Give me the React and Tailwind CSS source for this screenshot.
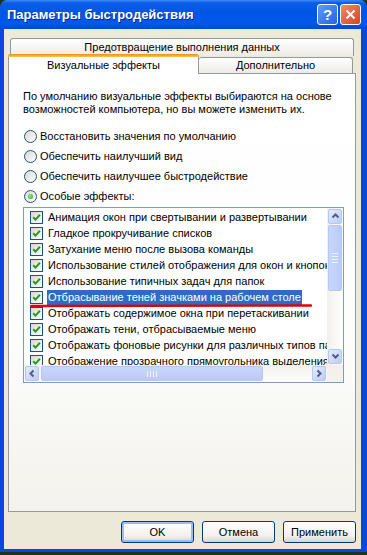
import React from "react";

const items = [
  "Анимация окон при свертывании и развертывании",
  "Гладкое прокручивание списков",
  "Затухание меню после вызова команды",
  "Использование стилей отображения для окон и кнопок",
  "Использование типичных задач для папок",
  "Отбрасывание теней значками на рабочем столе",
  "Отображать содержимое окна при перетаскивании",
  "Отображать тени, отбрасываемые меню",
  "Отображать фоновые рисунки для различных типов папок",
  "Отображение прозрачного прямоугольника выделения",
];

function Radio({ checked, label }) {
  return (
    <div className="h-[20px] flex items-center">
      <span className="ml-[1px] w-[13px] h-[13px] rounded-full border border-[#1c5180] bg-[linear-gradient(135deg,#d8d8d2,#ffffff)] flex items-center justify-center">
        {checked && (
          <span className="w-[5px] h-[5px] rounded-full bg-[radial-gradient(circle_at_40%_40%,#8de88d,#21a121)]" />
        )}
      </span>
      <span className="ml-[3px]">{label}</span>
    </div>
  );
}

function Check() {
  return (
    <span className="shrink-0 w-[13px] h-[13px] border border-[#1c5180] bg-[linear-gradient(135deg,#d8d8d2,#ffffff)] flex items-center justify-center">
      <svg width="9" height="9" viewBox="0 0 9 9">
        <path d="M1.2 4.2 L3.5 6.6 L7.9 1.8" stroke="#21a121" strokeWidth="2" fill="none" />
      </svg>
    </span>
  );
}

function ArrowBtn({ dir, className = "" }) {
  const d = {
    up: "M1.5 5.5 L4.5 2.5 L7.5 5.5",
    down: "M1.5 2.5 L4.5 5.5 L7.5 2.5",
    left: "M5.5 1.5 L2.5 4.5 L5.5 7.5",
    right: "M2.5 1.5 L5.5 4.5 L2.5 7.5",
  }[dir];
  return (
    <div
      className={`shrink-0 rounded-[2px] border border-[#b4c8f6] bg-[linear-gradient(135deg,#e3ebfe,#bccdf6)] flex items-center justify-center ${className}`}
    >
      <svg width="9" height="9" viewBox="0 0 9 9">
        <path d={d} stroke="#4d6185" strokeWidth="2" fill="none" />
      </svg>
    </div>
  );
}

function Button({ children, def }) {
  return (
    <button
      className={`w-[73px] h-[22px] rounded-[3px] border border-[#003c74] bg-[linear-gradient(180deg,#ffffff,#f2f1ec_70%,#d9d5cb)] text-[11px] text-black ${
        def ? "shadow-[inset_0_0_0_2px_#9dbcf2]" : ""
      }`}
    >
      {children}
    </button>
  );
}

export default function App() {
  return (
    <div className="w-[367px] h-[555px] bg-[#1c3519] overflow-hidden font-['Liberation_Sans',Arial,sans-serif] text-[11px] text-black">
      <div className="h-[552px] flex flex-col rounded-t-[7px] overflow-hidden">
        {/* title bar */}
        <div className="h-[29px] shrink-0 flex items-center pl-[7px] pr-[6px] bg-[linear-gradient(180deg,#3b8cf7_0%,#0a5de8_10%,#0055e5_45%,#0059ec_80%,#0048d4_100%)]">
          <span className="flex-1 text-white font-bold text-[13px] [text-shadow:1px_1px_0_#0b2a8a]">
            Параметры быстродействия
          </span>
          <div className="w-[21px] h-[21px] rounded-[3px] border border-white bg-[linear-gradient(135deg,#5d9bf8,#2463e6)] flex items-center justify-center text-white font-bold text-[15px] leading-none">
            ?
          </div>
          <div className="ml-[2px] w-[21px] h-[21px] rounded-[3px] border border-white bg-[linear-gradient(135deg,#ec8b6b,#d9431d)] flex items-center justify-center">
            <svg width="11" height="11" viewBox="0 0 11 11">
              <path d="M1.5 1.5 L9.5 9.5 M9.5 1.5 L1.5 9.5" stroke="white" strokeWidth="2" />
            </svg>
          </div>
        </div>

        {/* body */}
        <div className="flex-1 flex flex-col bg-[#ece9d8] border-l-[4px] border-r-[6px] border-b-[3px] border-[#0b47dd] pt-[9px]">
          {/* tabs */}
          <div className="ml-[6px] w-[344px] h-[18px] rounded-t-[3px] border border-b-0 border-[#919b9c] bg-[linear-gradient(180deg,#ffffff,#ecebe6)] flex items-center justify-center">
            Предотвращение выполнения данных
          </div>
          <div className="flex items-start -mt-[2px]">
            <div className="relative z-10 ml-[4px] w-[191px] h-[20px] -mb-[1px] rounded-t-[3px] border-x border-[#919b9c] bg-white flex flex-col">
              <div className="h-[3px] rounded-t-[3px] bg-[linear-gradient(180deg,#e68b2c,#ffc83c)] -mx-px" />
              <div className="flex-1 flex items-center justify-center pb-[1px]">Визуальные эффекты</div>
            </div>
            <div className="mt-[3px] w-[154px] h-[16px] rounded-t-[3px] border border-b-0 border-l-0 border-[#919b9c] bg-[linear-gradient(180deg,#ffffff,#ecebe6)] flex items-center justify-center">
              Дополнительно
            </div>
          </div>

          {/* panel */}
          <div className="ml-[4px] mr-[5px] h-[439px] border border-[#919b9c] bg-[linear-gradient(180deg,#ffffff_0%,#fdfdfc_60%,#f3f2ec_100%)] px-[14px] pt-[16px]">
            <p className="leading-[13px]">
              По умолчанию визуальные эффекты выбираются на основе
              <br />
              возможностей компьютера, но вы можете изменить их.
            </p>
            <div className="mt-[10px]">
              <Radio label="Восстановить значения по умолчанию" />
              <Radio label="Обеспечить наилучший вид" />
              <Radio label="Обеспечить наилучшее быстродействие" />
              <Radio checked label="Особые эффекты:" />
            </div>

            {/* list */}
            <div className="mt-[1px] w-[321px] h-[176px] border border-[#7f9db9] bg-white flex flex-col">
              <div className="flex-1 flex min-h-0">
                <div className="relative flex-1 overflow-hidden pt-[1px]">
                  {items.map((t, i) => (
                    <div key={i} className="h-[16px] flex items-center pl-[6px] whitespace-nowrap">
                      <Check />
                      <span
                        className={`ml-[4px] px-[1px] leading-[15px] ${
                          i === 5 ? "bg-[#316ac5] text-white" : ""
                        }`}
                      >
                        {t}
                      </span>
                    </div>
                  ))}
                  {/* red underline annotation */}
                  <svg className="absolute left-[6px] top-[95px]" width="282" height="6" viewBox="0 0 282 6">
                    <path d="M1 3 C 60 3.5, 150 3.5, 281 2.5" stroke="#e00000" strokeWidth="2.4" fill="none" strokeLinecap="round" />
                  </svg>
                </div>
                {/* vertical scrollbar */}
                <div className="w-[16px] flex flex-col bg-[linear-gradient(90deg,#f3f1ec,#fefefb)] py-[1px]">
                  <ArrowBtn dir="up" className="h-[15px] mx-[1px]" />
                  <div className="mt-[1px] mx-[1px] h-[66px] rounded-[2px] border border-[#b4c8f6] bg-[linear-gradient(90deg,#c9d7fc,#b9cbf6)] flex flex-col items-center justify-center gap-[2px]">
                    <span className="w-[6px] h-px bg-[#eef3fe]" />
                    <span className="w-[6px] h-px bg-[#eef3fe]" />
                    <span className="w-[6px] h-px bg-[#eef3fe]" />
                    <span className="w-[6px] h-px bg-[#eef3fe]" />
                  </div>
                  <div className="flex-1" />
                  <ArrowBtn dir="down" className="h-[15px] mx-[1px]" />
                </div>
              </div>
              {/* horizontal scrollbar */}
              <div className="h-[17px] flex">
                <div className="flex-1 flex items-center px-[1px] bg-[linear-gradient(180deg,#f3f1ec,#fefefb)]">
                  <ArrowBtn dir="left" className="w-[14px] h-[15px]" />
                  <div className="ml-[2px] w-[222px] h-[15px] rounded-[2px] border border-[#b4c8f6] bg-[linear-gradient(180deg,#c9d7fc,#b9cbf6)] flex items-center justify-center gap-[2px]">
                    <span className="w-px h-[6px] bg-[#eef3fe]" />
                    <span className="w-px h-[6px] bg-[#eef3fe]" />
                    <span className="w-px h-[6px] bg-[#eef3fe]" />
                    <span className="w-px h-[6px] bg-[#eef3fe]" />
                  </div>
                  <div className="flex-1" />
                  <ArrowBtn dir="right" className="w-[14px] h-[15px]" />
                </div>
                <div className="w-[16px] bg-[#f3f1ec]" />
              </div>
            </div>
          </div>

          {/* buttons */}
          <div className="mt-[9px] flex justify-end gap-[8px] pr-[5px]">
            <Button def>OK</Button>
            <Button>Отмена</Button>
            <Button>Применить</Button>
          </div>
        </div>
      </div>
    </div>
  );
}
